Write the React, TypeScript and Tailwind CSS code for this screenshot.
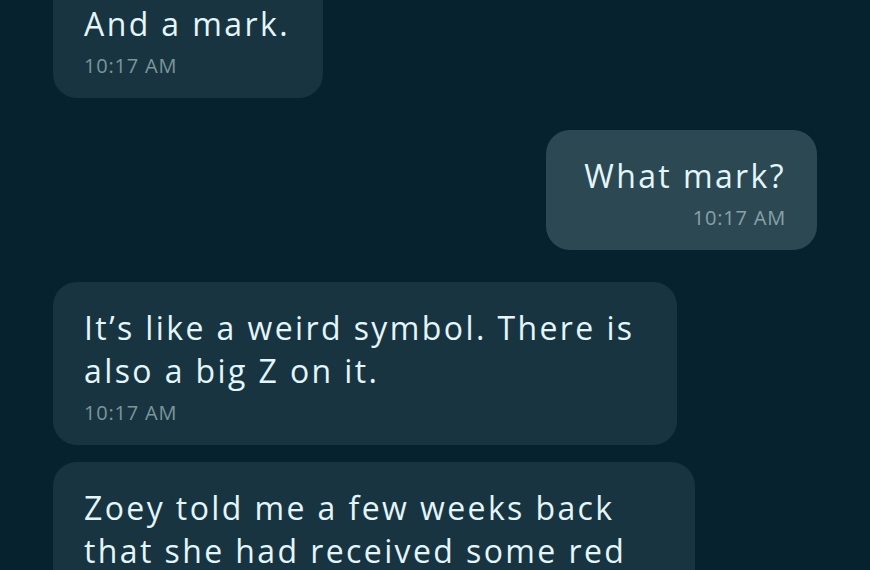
const messages = [
  { id: 1, mine: false, lines: ["And a mark."], time: "10:17 AM", width: "w-[270px]", gap: "-mt-[22px]" },
  { id: 2, mine: true, lines: ["What mark?"], time: "10:17 AM", width: "w-[271px]", gap: "mt-8" },
  {
    id: 3,
    mine: false,
    lines: ["It’s like a weird symbol. There is", "also a big Z on it."],
    time: "10:17 AM",
    width: "w-[624px]",
    gap: "mt-8",
  },
  {
    id: 4,
    mine: false,
    lines: ["Zoey told me a few weeks back", "that she had received some red", "envelopes too."],
    time: "10:17 AM",
    width: "w-[642px]",
    gap: "mt-[17px]",
  },
];

export default function App() {
  return (
    <div
      className="w-[870px] h-[570px] overflow-hidden bg-[#06222e] px-[53px]"
      style={{ fontFamily: "'Open Sans', 'Noto Sans', sans-serif" }}
    >
      <div className="flex flex-col">
        {messages.map((m) => (
          <div
            key={m.id}
            className={`${m.gap} ${m.width} ${
              m.mine ? "self-end bg-[#2c4953] text-right" : "self-start bg-[#183441]"
            } rounded-[24px] px-[31px] pt-6 pb-5 shrink-0`}
          >
            <p className="text-[32px] leading-[43px] text-[#e3f6fb] whitespace-nowrap tracking-[2.4px]">
              {m.lines.map((l, i) => (
                <span key={i} className="block">
                  {l}
                </span>
              ))}
            </p>
            <p
              className={`mt-[9px] text-[20px] leading-6 tracking-[0.8px] ${
                m.mine ? "text-[#8ba0a6]" : "text-[#7d949b]"
              }`}
            >
              {m.time}
            </p>
          </div>
        ))}
      </div>
    </div>
  );
}
